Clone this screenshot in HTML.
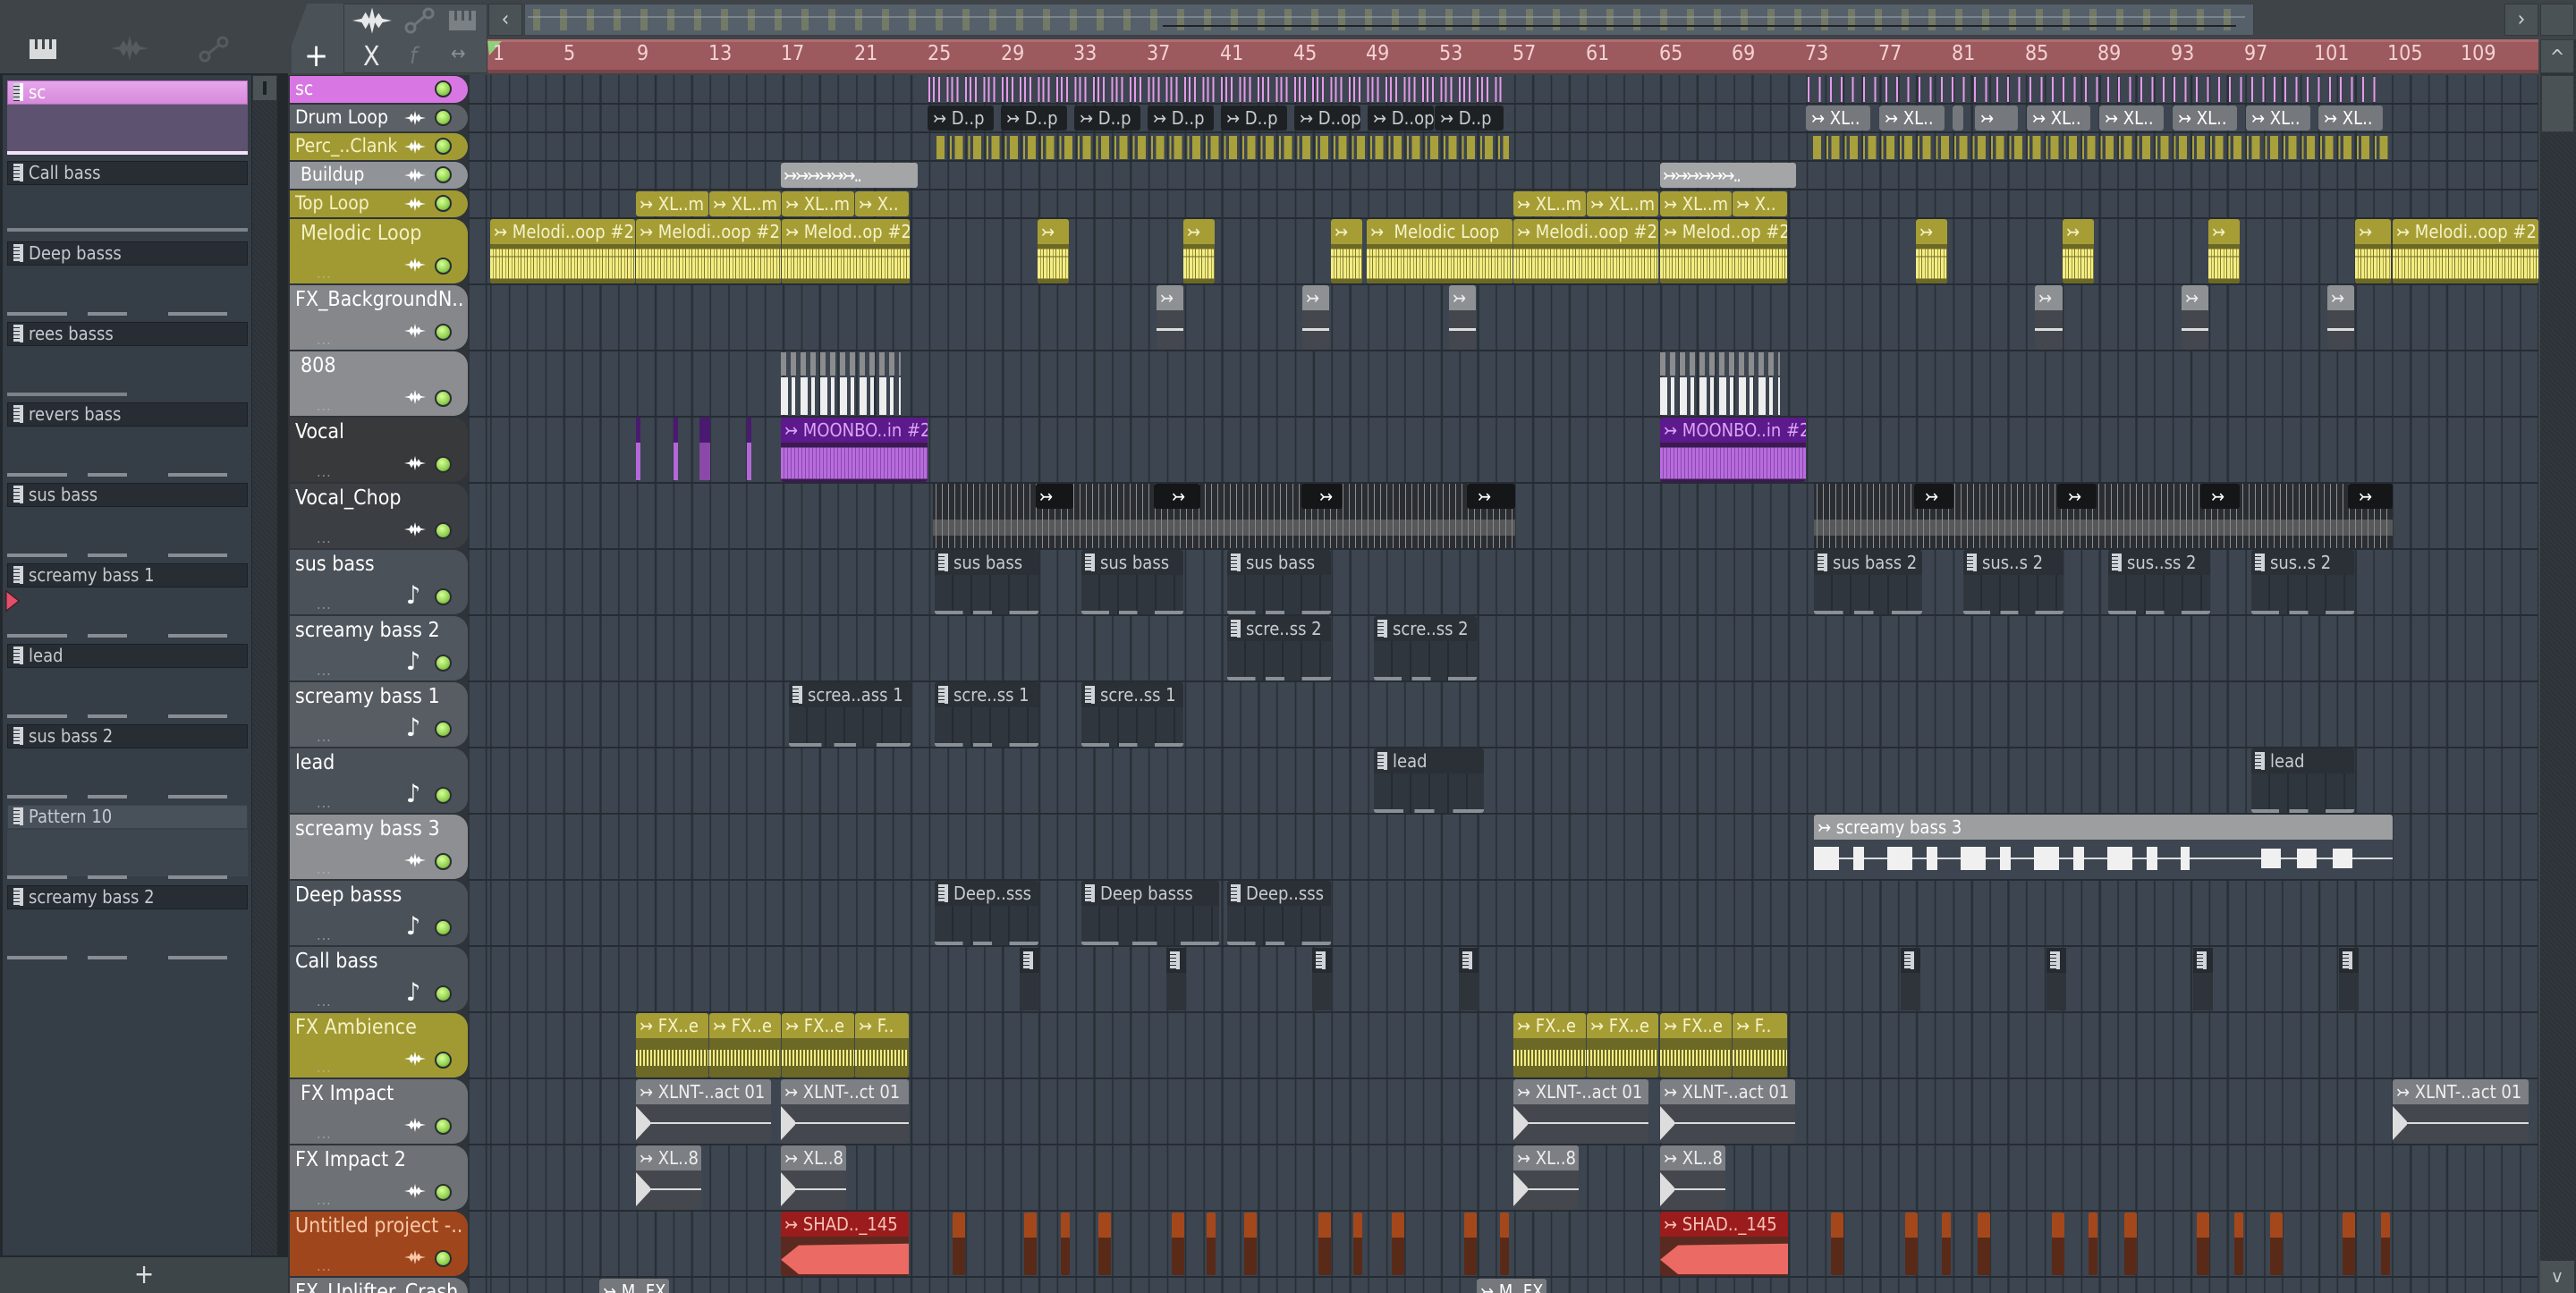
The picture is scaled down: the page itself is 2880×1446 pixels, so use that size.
<!DOCTYPE html>
<html><head><meta charset="utf-8">
<style>
*{box-sizing:border-box;margin:0;padding:0}
html,body{width:2880px;height:1446px;overflow:hidden}
body{background:#3e4448}
#root{position:relative;width:2880px;height:1446px;overflow:hidden;background:#3e4448;font-family:"DejaVu Sans","Liberation Sans",sans-serif;font-stretch:condensed}
.a{position:absolute}
.grid{position:absolute;left:523px;top:84px;width:2315px;height:1362px;background-color:#3d4550;background-image:repeating-linear-gradient(90deg,#283037 0 2px,transparent 2px 20.44px);background-position:25px 0}
.hl{position:absolute;left:523px;width:2315px;height:2px;background:#262c33}
.tr{position:absolute;left:324px;width:199px;border-radius:0 16px 16px 0;color:#fff;font-size:23px;padding:3px 0 0 6px;white-space:nowrap;overflow:hidden}
.tr.s{font-size:21px;padding-top:2px}
.led{position:absolute;left:162px;width:19px;height:19px;border-radius:50%;background:radial-gradient(circle at 40% 35%,#d8ff98,#90d050 60%,#5a8a30);border:2px solid #2a2e30}
.wv{position:absolute;left:128px;width:24px;height:22px}
.dots{position:absolute;left:30px;bottom:2px;color:#c0c0c0;font-size:16px;letter-spacing:1px;opacity:.6}
.c{position:absolute;overflow:hidden;border-radius:3px;white-space:nowrap;font-size:20px;color:#fff}
.c .h{height:28px;line-height:28px;padding-left:4px}
.c .b{position:absolute;left:0;right:0;top:28px;bottom:0}
.ol .h{background:#a69e35;color:#f6f2c8}
.ol .b{background:linear-gradient(#6c6826 0 12%,transparent 12% 30%,rgba(108,104,38,.5) 30% 34%,transparent 34% 88%,#6c6826 88%),repeating-linear-gradient(90deg,#f3ed84 0 3px,#a8a044 3px 4px,#f3ed84 4px 6px,#807a30 6px 7px)}
.gr .h{background:#7c7f83;color:#eee}
.gr .b{background:#44484e}
.pt{background:#30363d}
.pt .h{background:#2a3036;color:#c8ccd0}
.pt .b{background:repeating-linear-gradient(90deg,transparent 0 19px,#262b31 19px 21px);}
.pt .b:after{content:"";position:absolute;left:0;right:0;bottom:0;height:4px;background:linear-gradient(90deg,#8a9096 0 27%,transparent 27% 37%,#8a9096 37% 55%,transparent 55% 72%,#8a9096 72%)}
.pi{display:inline-block;width:11px;height:20px;background:#d0d4d8;vertical-align:-3px;margin-right:6px;background-image:repeating-linear-gradient(#d0d4d8 0 3px,#2a3036 3px 4px);border-right:4px solid #d0d4d8}
.pe{position:absolute;left:8px;width:269px;height:27px;background:#272d33;border:1px solid #1c2025;color:#c4cad0;font-size:20px;line-height:25px;padding-left:6px;white-space:nowrap}
.ds{position:absolute;left:8px;width:246px;height:4px;background:linear-gradient(90deg,#878d93 0 67px,transparent 67px 90px,#878d93 90px 134px,transparent 134px 180px,#878d93 180px)}
.ps{position:absolute;top:1356px;width:14px;height:70px;border-radius:2px;background:linear-gradient(#a4481c 0 28px,#5a2a18 28px)}
.mk{position:absolute;top:1060px;width:22px;height:70px;background:linear-gradient(#262b31 0 28px,#2e343a 28px)}
</style></head><body><div id="root">

<div class="a" style="left:0;top:0;width:322px;height:82px;background:#3e4448"></div>
<div class="a" style="left:33px;top:44px;width:30px;height:22px;background:#d8dadc"></div>
<div class="a" style="left:39px;top:44px;width:3px;height:11px;background:#3e4448"></div>
<div class="a" style="left:47px;top:44px;width:3px;height:11px;background:#3e4448"></div>
<div class="a" style="left:55px;top:44px;width:3px;height:11px;background:#3e4448"></div>
<svg class="a" style="left:124px;top:40px" width="42" height="28" viewBox="0 0 42 28"><path d="M0 14 L10 12 L14 5 L18 12 L21 0 L24 12 L28 6 L32 12 L42 14 L32 16 L28 22 L24 16 L21 28 L18 16 L14 23 L10 16 Z" fill="#555b60"/></svg>
<svg class="a" style="left:222px;top:40px" width="34" height="30" viewBox="0 0 34 30"><circle cx="7" cy="23" r="5" stroke="#555b60" stroke-width="3" fill="none"/><circle cx="27" cy="7" r="5" stroke="#555b60" stroke-width="3" fill="none"/><path d="M11 20 L23 10" stroke="#555b60" stroke-width="3"/></svg>

<div class="a" style="left:0;top:82px;width:322px;height:1324px;background:#23282d"></div>
<div class="a" style="left:3px;top:84px;width:278px;height:1320px;background:#353d46"></div>
<div class="a" style="left:282px;top:84px;width:28px;height:1320px;background:repeating-linear-gradient(45deg,#2c3237 0 2px,#31373d 2px 4px)"></div>
<div class="a" style="left:283px;top:85px;width:26px;height:27px;background:#4c5357"><div class="a" style="left:11px;top:6px;width:4px;height:15px;background:#1e2226"></div></div>
<div class="a" style="left:0;top:1406px;width:322px;height:40px;background:#3e4549;color:#ddd;font-size:30px;text-align:center;line-height:40px">+</div>

<div class="pe" style="top:90px;background:linear-gradient(#e6a6ec,#d68ada);color:#fff;border-color:#b06ab8"><span class="pi" style="background-color:#fff;border-right-color:#fff"></span>sc</div>
<div class="a" style="left:8px;top:117px;width:269px;height:52px;background:#5d5370"></div>
<div class="a" style="left:8px;top:169px;width:269px;height:4px;background:#f6e2f6"></div>
<div class="pe" style="top:180px"><span class="pi"></span>Call bass</div>
<div class="a" style="left:8px;top:255px;width:269px;height:4px;background:#7c8288"></div>
<div class="pe" style="top:270px"><span class="pi"></span>Deep basss</div>
<div class="ds" style="top:349px"></div>
<div class="pe" style="top:360px"><span class="pi"></span>rees basss</div>
<div class="a" style="left:8px;top:439px;width:134px;height:4px;background:#7c8288"></div>
<div class="pe" style="top:450px"><span class="pi"></span>revers bass</div>
<div class="ds" style="top:529px"></div>
<div class="pe" style="top:540px"><span class="pi"></span>sus bass</div>
<div class="ds" style="top:619px"></div>
<div class="pe" style="top:630px"><span class="pi"></span>screamy bass 1</div>
<svg class="a" style="left:6px;top:660px" width="16" height="24" viewBox="0 0 16 24"><path d="M1 1 L15 12 L1 23 Z" fill="#e0506a" stroke="#401018"/></svg>
<div class="ds" style="top:709px"></div>
<div class="pe" style="top:720px"><span class="pi"></span>lead</div>
<div class="ds" style="top:799px"></div>
<div class="pe" style="top:810px"><span class="pi"></span>sus bass 2</div>
<div class="ds" style="top:889px"></div>
<div class="pe" style="top:900px;background:#48505a;border-color:#3a4148"><span class="pi"></span>Pattern 10</div>
<div class="a" style="left:8px;top:928px;width:269px;height:52px;background:#3d454f"></div>
<div class="ds" style="top:979px"></div>
<div class="pe" style="top:990px"><span class="pi"></span>screamy bass 2</div>
<div class="ds" style="top:1069px"></div>

<div class="a" style="left:322px;top:0;width:2558px;height:84px;background:#3e4448"></div>
<div class="a" style="left:326px;top:4px;width:58px;height:78px;background:#4a5157;clip-path:polygon(30% 0,100% 0,100% 100%,0 100%,0 60%)"></div>
<div class="a" style="left:340px;top:42px;color:#fff;font-size:36px">+</div>
<div class="a" style="left:384px;top:4px;width:161px;height:78px;background:#4d5459;border:1px solid #363b40"></div>
<svg class="a" style="left:394px;top:8px" width="44" height="30" viewBox="0 0 42 28"><path d="M0 14 L10 12 L14 5 L18 12 L21 0 L24 12 L28 6 L32 12 L42 14 L32 16 L28 22 L24 16 L21 28 L18 16 L14 23 L10 16 Z" fill="#e6e8ea"/></svg>
<svg class="a" style="left:452px;top:8px" width="34" height="30" viewBox="0 0 34 30"><circle cx="7" cy="23" r="5" stroke="#70767a" stroke-width="3" fill="none"/><circle cx="27" cy="7" r="5" stroke="#70767a" stroke-width="3" fill="none"/><path d="M11 20 L23 10" stroke="#70767a" stroke-width="3"/></svg>
<div class="a" style="left:502px;top:12px;width:30px;height:22px;background:#7a8084"></div>
<div class="a" style="left:508px;top:12px;width:3px;height:11px;background:#4d5459"></div>
<div class="a" style="left:516px;top:12px;width:3px;height:11px;background:#4d5459"></div>
<div class="a" style="left:524px;top:12px;width:3px;height:11px;background:#4d5459"></div>
<div class="a" style="left:406px;top:46px;color:#e6e8ea;font-size:30px">X</div>
<div class="a" style="left:458px;top:48px;color:#70767a;font-size:26px;font-style:italic">f</div>
<div class="a" style="left:504px;top:48px;color:#8a9094;font-size:22px">↔</div>
<div class="a" style="left:546px;top:4px;width:38px;height:36px;background:#4b5256;border:1px solid #33383c;color:#d0d4d6;font-size:24px;text-align:center;line-height:32px">‹</div>
<div class="a" style="left:586px;top:4px;width:1934px;height:36px;background:#56606a;border:1px solid #3a4146"></div>
<div class="a" style="left:590px;top:10px;width:1920px;height:24px;background:repeating-linear-gradient(90deg,transparent 0 6px,rgba(200,200,90,.5) 6px 14px,transparent 14px 30px);opacity:.5"></div>
<div class="a" style="left:590px;top:18px;width:1920px;height:2px;background:#9ea6ae;opacity:.5"></div>
<div class="a" style="left:1300px;top:28px;width:1200px;height:2px;background:#222"></div>
<div class="a" style="left:2800px;top:4px;width:38px;height:36px;background:#4b5256;border:1px solid #33383c;color:#d0d4d6;font-size:24px;text-align:center;line-height:32px">›</div>
<div class="a" style="left:2840px;top:4px;width:38px;height:36px;background:#4b5256;border:1px solid #33383c"></div>

<div class="a" style="left:545px;top:44px;width:2293px;height:38px;background:linear-gradient(#b06c70 0 3px,#9c5a5e 3px 34px,#7a4448 34px)"></div>
<svg class="a" style="left:545px;top:46px" width="18" height="16"><path d="M0 0 L16 0 L2 16 Z" fill="#8ed07a"/></svg>
<div class="a" style="left:0;top:47px;font-size:23px;color:#f4d2d2;white-space:nowrap">
<span class="a" style="left:551px">1</span><span class="a" style="left:630px">5</span><span class="a" style="left:712px">9</span><span class="a" style="left:792px">13</span><span class="a" style="left:873px">17</span><span class="a" style="left:955px">21</span><span class="a" style="left:1037px">25</span><span class="a" style="left:1119px">29</span><span class="a" style="left:1200px">33</span><span class="a" style="left:1282px">37</span><span class="a" style="left:1364px">41</span><span class="a" style="left:1446px">45</span><span class="a" style="left:1527px">49</span><span class="a" style="left:1609px">53</span><span class="a" style="left:1691px">57</span><span class="a" style="left:1773px">61</span><span class="a" style="left:1855px">65</span><span class="a" style="left:1936px">69</span><span class="a" style="left:2018px">73</span><span class="a" style="left:2100px">77</span><span class="a" style="left:2182px">81</span><span class="a" style="left:2264px">85</span><span class="a" style="left:2345px">89</span><span class="a" style="left:2427px">93</span><span class="a" style="left:2509px">97</span><span class="a" style="left:2587px">101</span><span class="a" style="left:2669px">105</span><span class="a" style="left:2751px">109</span></div>

<div class="a" style="left:2840px;top:44px;width:40px;height:1402px;background:repeating-linear-gradient(45deg,#2c3237 0 2px,#31373d 2px 4px)"></div>
<div class="a" style="left:2840px;top:44px;width:38px;height:38px;background:#4b5256;border:1px solid #33383c;color:#ccc;text-align:center;font-size:22px;line-height:40px">^</div>
<div class="a" style="left:2841px;top:84px;width:37px;height:64px;background:#4b5256;border:1px solid #33383c"></div>
<div class="a" style="left:2840px;top:1410px;width:38px;height:36px;background:#4b5256;color:#ccc;text-align:center;font-size:20px;line-height:34px">v</div>

<div class="grid"></div>
<div class="a" style="left:322px;top:84px;width:203px;height:1362px;background:#2e343a"></div>
<div class="hl" style="top:115px"></div><div class="hl" style="top:147px"></div><div class="hl" style="top:179px"></div><div class="hl" style="top:211px"></div><div class="hl" style="top:243px"></div><div class="hl" style="top:317px"></div><div class="hl" style="top:391px"></div><div class="hl" style="top:465px"></div><div class="hl" style="top:539px"></div><div class="hl" style="top:613px"></div><div class="hl" style="top:687px"></div><div class="hl" style="top:761px"></div><div class="hl" style="top:835px"></div><div class="hl" style="top:909px"></div><div class="hl" style="top:983px"></div><div class="hl" style="top:1057px"></div><div class="hl" style="top:1131px"></div><div class="hl" style="top:1205px"></div><div class="hl" style="top:1279px"></div><div class="hl" style="top:1353px"></div><div class="hl" style="top:1427px"></div>

<div class="tr s" style="top:85px;height:30px;background:#d877e3">sc<div class="led" style="top:5px"></div></div>
<div class="tr s" style="top:117px;height:30px;background:#5c6167">Drum Loop<svg class="wv" style="top:4px" viewBox="0 0 42 28"><path d="M0 14 L10 12 L14 5 L18 12 L21 0 L24 12 L28 6 L32 12 L42 14 L32 16 L28 22 L24 16 L21 28 L18 16 L14 23 L10 16 Z" fill="#fff"/></svg><div class="led" style="top:5px"></div></div>
<div class="tr s" style="top:149px;height:30px;background:#a19a33;color:#f4f0c4">Perc_..Clank<svg class="wv" style="top:4px" viewBox="0 0 42 28"><path d="M0 14 L10 12 L14 5 L18 12 L21 0 L24 12 L28 6 L32 12 L42 14 L32 16 L28 22 L24 16 L21 28 L18 16 L14 23 L10 16 Z" fill="#fff"/></svg><div class="led" style="top:5px"></div></div>
<div class="tr s" style="top:181px;height:30px;background:#909397;padding-left:12px">Buildup<svg class="wv" style="top:4px" viewBox="0 0 42 28"><path d="M0 14 L10 12 L14 5 L18 12 L21 0 L24 12 L28 6 L32 12 L42 14 L32 16 L28 22 L24 16 L21 28 L18 16 L14 23 L10 16 Z" fill="#fff"/></svg><div class="led" style="top:5px"></div></div>
<div class="tr s" style="top:213px;height:30px;background:#a19a33;color:#f4f0c4">Top Loop<svg class="wv" style="top:4px" viewBox="0 0 42 28"><path d="M0 14 L10 12 L14 5 L18 12 L21 0 L24 12 L28 6 L32 12 L42 14 L32 16 L28 22 L24 16 L21 28 L18 16 L14 23 L10 16 Z" fill="#fff"/></svg><div class="led" style="top:5px"></div></div>

<div class="tr" style="top:245px;height:72px;background:#a19a33;color:#f4f0c4;padding-left:12px">Melodic Loop<svg class="wv" style="top:40px" viewBox="0 0 42 28"><path d="M0 14 L10 12 L14 5 L18 12 L21 0 L24 12 L28 6 L32 12 L42 14 L32 16 L28 22 L24 16 L21 28 L18 16 L14 23 L10 16 Z" fill="#fff"/></svg><div class="led" style="top:43px"></div><div class="dots">...</div></div>
<div class="tr" style="top:319px;height:72px;background:#85878b">FX_BackgroundN..<svg class="wv" style="top:40px" viewBox="0 0 42 28"><path d="M0 14 L10 12 L14 5 L18 12 L21 0 L24 12 L28 6 L32 12 L42 14 L32 16 L28 22 L24 16 L21 28 L18 16 L14 23 L10 16 Z" fill="#fff"/></svg><div class="led" style="top:43px"></div><div class="dots">...</div></div>
<div class="tr" style="top:393px;height:72px;background:#8b8d90;padding-left:12px">808<svg class="wv" style="top:40px" viewBox="0 0 42 28"><path d="M0 14 L10 12 L14 5 L18 12 L21 0 L24 12 L28 6 L32 12 L42 14 L32 16 L28 22 L24 16 L21 28 L18 16 L14 23 L10 16 Z" fill="#fff"/></svg><div class="led" style="top:43px"></div><div class="dots">...</div></div>
<div class="tr" style="top:467px;height:72px;background:#38393b">Vocal<svg class="wv" style="top:40px" viewBox="0 0 42 28"><path d="M0 14 L10 12 L14 5 L18 12 L21 0 L24 12 L28 6 L32 12 L42 14 L32 16 L28 22 L24 16 L21 28 L18 16 L14 23 L10 16 Z" fill="#fff"/></svg><div class="led" style="top:43px"></div><div class="dots">...</div></div>
<div class="tr" style="top:541px;height:72px;background:#3b3e43">Vocal_Chop<svg class="wv" style="top:40px" viewBox="0 0 42 28"><path d="M0 14 L10 12 L14 5 L18 12 L21 0 L24 12 L28 6 L32 12 L42 14 L32 16 L28 22 L24 16 L21 28 L18 16 L14 23 L10 16 Z" fill="#fff"/></svg><div class="led" style="top:43px"></div><div class="dots">...</div></div>
<div class="tr" style="top:615px;height:72px;background:#4b5158">sus bass<span class="a" style="left:130px;top:34px;font-size:28px">♪</span><div class="led" style="top:43px"></div><div class="dots">...</div></div>
<div class="tr" style="top:689px;height:72px;background:#51575e">screamy bass 2<span class="a" style="left:130px;top:34px;font-size:28px">♪</span><div class="led" style="top:43px"></div><div class="dots">...</div></div>
<div class="tr" style="top:763px;height:72px;background:#585d63">screamy bass 1<span class="a" style="left:130px;top:34px;font-size:28px">♪</span><div class="led" style="top:43px"></div><div class="dots">...</div></div>
<div class="tr" style="top:837px;height:72px;background:#4b5158">lead<span class="a" style="left:130px;top:34px;font-size:28px">♪</span><div class="led" style="top:43px"></div><div class="dots">...</div></div>
<div class="tr" style="top:911px;height:72px;background:#8d8f92">screamy bass 3<svg class="wv" style="top:40px" viewBox="0 0 42 28"><path d="M0 14 L10 12 L14 5 L18 12 L21 0 L24 12 L28 6 L32 12 L42 14 L32 16 L28 22 L24 16 L21 28 L18 16 L14 23 L10 16 Z" fill="#fff"/></svg><div class="led" style="top:43px"></div><div class="dots">...</div></div>
<div class="tr" style="top:985px;height:72px;background:#4b5158">Deep basss<span class="a" style="left:130px;top:34px;font-size:28px">♪</span><div class="led" style="top:43px"></div><div class="dots">...</div></div>
<div class="tr" style="top:1059px;height:72px;background:#4b5158">Call bass<span class="a" style="left:130px;top:34px;font-size:28px">♪</span><div class="led" style="top:43px"></div><div class="dots">...</div></div>
<div class="tr" style="top:1133px;height:72px;background:#a19a33;color:#f4f0c4">FX Ambience<svg class="wv" style="top:40px" viewBox="0 0 42 28"><path d="M0 14 L10 12 L14 5 L18 12 L21 0 L24 12 L28 6 L32 12 L42 14 L32 16 L28 22 L24 16 L21 28 L18 16 L14 23 L10 16 Z" fill="#fff"/></svg><div class="led" style="top:43px"></div><div class="dots">...</div></div>
<div class="tr" style="top:1207px;height:72px;background:#6e7175;padding-left:12px">FX Impact<svg class="wv" style="top:40px" viewBox="0 0 42 28"><path d="M0 14 L10 12 L14 5 L18 12 L21 0 L24 12 L28 6 L32 12 L42 14 L32 16 L28 22 L24 16 L21 28 L18 16 L14 23 L10 16 Z" fill="#fff"/></svg><div class="led" style="top:43px"></div><div class="dots">...</div></div>
<div class="tr" style="top:1281px;height:72px;background:#6e7175">FX Impact 2<svg class="wv" style="top:40px" viewBox="0 0 42 28"><path d="M0 14 L10 12 L14 5 L18 12 L21 0 L24 12 L28 6 L32 12 L42 14 L32 16 L28 22 L24 16 L21 28 L18 16 L14 23 L10 16 Z" fill="#fff"/></svg><div class="led" style="top:43px"></div><div class="dots">...</div></div>
<div class="tr" style="top:1355px;height:72px;background:#a0461d;color:#f8c8a8">Untitled project -..<svg class="wv" style="top:40px" viewBox="0 0 42 28"><path d="M0 14 L10 12 L14 5 L18 12 L21 0 L24 12 L28 6 L32 12 L42 14 L32 16 L28 22 L24 16 L21 28 L18 16 L14 23 L10 16 Z" fill="#f8c8a8"/></svg><div class="led" style="top:43px"></div><div class="dots">...</div></div>
<div class="tr" style="top:1429px;height:72px;background:#6e7175">FX_Uplifter_Crash</div>

<div class="a" style="left:1038px;top:86px;width:643px;height:28px;background:repeating-linear-gradient(90deg,#e49ae8 0 2px,transparent 2px 5px,#e49ae8 5px 7px,transparent 7px 11px,#e49ae8 11px 13px,transparent 13px 20.44px)"></div>
<div class="a" style="left:2021px;top:86px;width:645px;height:28px;background:repeating-linear-gradient(90deg,#e49ae8 0 2px,transparent 2px 12.4px)"></div>

<div class="c" style="left:1037px;top:118px;width:74px;height:28px;background:#1e2124;color:#c8ccd0;padding-left:6px;line-height:28px">↣ D..p</div>
<div class="c" style="left:1119px;top:118px;width:74px;height:28px;background:#1e2124;color:#c8ccd0;padding-left:6px;line-height:28px">↣ D..p</div>
<div class="c" style="left:1201px;top:118px;width:74px;height:28px;background:#1e2124;color:#c8ccd0;padding-left:6px;line-height:28px">↣ D..p</div>
<div class="c" style="left:1283px;top:118px;width:74px;height:28px;background:#1e2124;color:#c8ccd0;padding-left:6px;line-height:28px">↣ D..p</div>
<div class="c" style="left:1365px;top:118px;width:74px;height:28px;background:#1e2124;color:#c8ccd0;padding-left:6px;line-height:28px">↣ D..p</div>
<div class="c" style="left:1447px;top:118px;width:74px;height:28px;background:#1e2124;color:#c8ccd0;padding-left:6px;line-height:28px">↣ D..op</div>
<div class="c" style="left:1529px;top:118px;width:74px;height:28px;background:#1e2124;color:#c8ccd0;padding-left:6px;line-height:28px">↣ D..op</div>
<div class="c" style="left:1604px;top:118px;width:77px;height:28px;background:#1e2124;color:#c8ccd0;padding-left:6px;line-height:28px">↣ D..p</div>
<div class="c" style="left:2019px;top:118px;width:72px;height:28px;background:#75787c;padding-left:6px;line-height:28px">↣ XL..</div>
<div class="c" style="left:2101px;top:118px;width:73px;height:28px;background:#75787c;padding-left:6px;line-height:28px">↣ XL..</div>
<div class="c" style="left:2183px;top:118px;width:12px;height:28px;background:#75787c"></div>
<div class="c" style="left:2208px;top:118px;width:48px;height:28px;background:#75787c;padding-left:6px;line-height:28px">↣</div>
<div class="c" style="left:2266px;top:118px;width:71px;height:28px;background:#75787c;padding-left:6px;line-height:28px">↣ XL..</div>
<div class="c" style="left:2347px;top:118px;width:72px;height:28px;background:#75787c;padding-left:6px;line-height:28px">↣ XL..</div>
<div class="c" style="left:2429px;top:118px;width:72px;height:28px;background:#75787c;padding-left:6px;line-height:28px">↣ XL..</div>
<div class="c" style="left:2511px;top:118px;width:72px;height:28px;background:#75787c;padding-left:6px;line-height:28px">↣ XL..</div>
<div class="c" style="left:2592px;top:118px;width:72px;height:28px;background:#75787c;padding-left:6px;line-height:28px">↣ XL..</div>

<div class="a" style="left:1047px;top:152px;width:640px;height:26px;background:repeating-linear-gradient(90deg,#a8a03a 0 9px,transparent 9px 15px,#a8a03a 15px 17px,transparent 17px 20.44px)"></div>
<div class="a" style="left:2027px;top:152px;width:648px;height:26px;background:repeating-linear-gradient(90deg,#a8a03a 0 9px,transparent 9px 15px,#a8a03a 15px 17px,transparent 17px 20.44px)"></div>

<div class="c" style="left:873px;top:182px;width:153px;height:28px;background:#a3a5a7;line-height:28px;padding-left:3px;letter-spacing:-2px">↣↣↣↣↣↣..</div>
<div class="c" style="left:1856px;top:182px;width:152px;height:28px;background:#a3a5a7;line-height:28px;padding-left:3px;letter-spacing:-2px">↣↣↣↣↣↣..</div>

<div class="c ol" style="left:711px;top:214px;width:81px;height:28px"><div class="h">↣ XL..m</div></div>
<div class="c ol" style="left:793px;top:214px;width:80px;height:28px"><div class="h">↣ XL..m</div></div>
<div class="c ol" style="left:874px;top:214px;width:81px;height:28px"><div class="h">↣ XL..m</div></div>
<div class="c ol" style="left:956px;top:214px;width:60px;height:28px"><div class="h">↣ X..</div></div>
<div class="c ol" style="left:1692px;top:214px;width:81px;height:28px"><div class="h">↣ XL..m</div></div>
<div class="c ol" style="left:1774px;top:214px;width:80px;height:28px"><div class="h">↣ XL..m</div></div>
<div class="c ol" style="left:1856px;top:214px;width:80px;height:28px"><div class="h">↣ XL..m</div></div>
<div class="c ol" style="left:1937px;top:214px;width:61px;height:28px"><div class="h">↣ X..</div></div>

<div class="c ol" style="left:548px;top:245px;width:162px;height:72px"><div class="h">↣ Melodi..oop #2</div><div class="b"></div></div>
<div class="c ol" style="left:711px;top:245px;width:162px;height:72px"><div class="h">↣ Melodi..oop #2</div><div class="b"></div></div>
<div class="c ol" style="left:874px;top:245px;width:143px;height:72px"><div class="h">↣ Melod..op #2</div><div class="b"></div></div>
<div class="c ol" style="left:1160px;top:245px;width:35px;height:72px"><div class="h">↣</div><div class="b"></div></div>
<div class="c ol" style="left:1323px;top:245px;width:35px;height:72px"><div class="h">↣</div><div class="b"></div></div>
<div class="c ol" style="left:1488px;top:245px;width:35px;height:72px"><div class="h">↣</div><div class="b"></div></div>
<div class="c ol" style="left:1528px;top:245px;width:163px;height:72px"><div class="h">↣ &nbsp;Melodic Loop</div><div class="b"></div></div>
<div class="c ol" style="left:1692px;top:245px;width:162px;height:72px"><div class="h">↣ Melodi..oop #2</div><div class="b"></div></div>
<div class="c ol" style="left:1856px;top:245px;width:142px;height:72px"><div class="h">↣ Melod..op #2</div><div class="b"></div></div>
<div class="c ol" style="left:2142px;top:245px;width:35px;height:72px"><div class="h">↣</div><div class="b"></div></div>
<div class="c ol" style="left:2306px;top:245px;width:35px;height:72px"><div class="h">↣</div><div class="b"></div></div>
<div class="c ol" style="left:2469px;top:245px;width:35px;height:72px"><div class="h">↣</div><div class="b"></div></div>
<div class="c ol" style="left:2633px;top:245px;width:40px;height:72px"><div class="h">↣</div><div class="b"></div></div>
<div class="c ol" style="left:2675px;top:245px;width:163px;height:72px"><div class="h">↣ Melodi..oop #2</div><div class="b"></div></div>

<div class="c gr" style="left:1293px;top:319px;width:30px;height:72px"><div class="h" style="background:#8e9194">↣</div><div class="b"><div class="a" style="left:0;right:0;top:20px;height:3px;background:#ddd"></div></div></div>
<div class="c gr" style="left:1456px;top:319px;width:30px;height:72px"><div class="h" style="background:#8e9194">↣</div><div class="b"><div class="a" style="left:0;right:0;top:20px;height:3px;background:#ddd"></div></div></div>
<div class="c gr" style="left:1620px;top:319px;width:30px;height:72px"><div class="h" style="background:#8e9194">↣</div><div class="b"><div class="a" style="left:0;right:0;top:20px;height:3px;background:#ddd"></div></div></div>
<div class="c gr" style="left:2275px;top:319px;width:31px;height:72px"><div class="h" style="background:#8e9194">↣</div><div class="b"><div class="a" style="left:0;right:0;top:20px;height:3px;background:#ddd"></div></div></div>
<div class="c gr" style="left:2439px;top:319px;width:30px;height:72px"><div class="h" style="background:#8e9194">↣</div><div class="b"><div class="a" style="left:0;right:0;top:20px;height:3px;background:#ddd"></div></div></div>
<div class="c gr" style="left:2602px;top:319px;width:30px;height:72px"><div class="h" style="background:#8e9194">↣</div><div class="b"><div class="a" style="left:0;right:0;top:20px;height:3px;background:#ddd"></div></div></div>

<div class="a" style="left:873px;top:394px;width:134px;height:26px;background:repeating-linear-gradient(90deg,#8a8c8e 0 6px,transparent 6px 11px)"></div>
<div class="a" style="left:873px;top:422px;width:134px;height:42px;background:repeating-linear-gradient(90deg,#eeeeee 0 8px,transparent 8px 12px,#eeeeee 12px 16px,transparent 16px 22px)"></div>
<div class="a" style="left:1856px;top:394px;width:134px;height:26px;background:repeating-linear-gradient(90deg,#8a8c8e 0 6px,transparent 6px 11px)"></div>
<div class="a" style="left:1856px;top:422px;width:134px;height:42px;background:repeating-linear-gradient(90deg,#eeeeee 0 8px,transparent 8px 12px,#eeeeee 12px 16px,transparent 16px 22px)"></div>

<div class="a" style="left:711px;top:467px;width:5px;height:70px;background:linear-gradient(#4a1a70 0 28px,#b468d8 28px)"></div>
<div class="a" style="left:753px;top:467px;width:5px;height:70px;background:linear-gradient(#4a1a70 0 28px,#b468d8 28px)"></div>
<div class="a" style="left:782px;top:467px;width:12px;height:70px;background:linear-gradient(#4a1a70 0 28px,#8a48a8 28px)"></div>
<div class="a" style="left:835px;top:467px;width:5px;height:70px;background:linear-gradient(#4a1a70 0 28px,#b468d8 28px)"></div>
<div class="c" style="left:873px;top:467px;width:164px;height:72px"><div class="h" style="background:#5c1a8c;color:#dca4f4">↣ MOONBO..in #2</div><div class="b" style="background:linear-gradient(#3a1a50 0 12%,transparent 12% 92%,#3a1a50 92%),repeating-linear-gradient(90deg,#b86cdc 0 3px,#8a48b0 3px 4px)"></div></div>
<div class="c" style="left:1856px;top:467px;width:163px;height:72px"><div class="h" style="background:#5c1a8c;color:#dca4f4">↣ MOONBO..in #2</div><div class="b" style="background:linear-gradient(#3a1a50 0 12%,transparent 12% 92%,#3a1a50 92%),repeating-linear-gradient(90deg,#b86cdc 0 3px,#8a48b0 3px 4px)"></div></div>

<div class="a" style="left:1043px;top:541px;width:651px;height:72px;background:repeating-linear-gradient(90deg,#2a2d31 0 3px,#8c8e90 3px 4px,#2a2d31 4px 7px)"></div>
<div class="a" style="left:1043px;top:568px;width:651px;height:44px;background:linear-gradient(transparent 30%,rgba(130,130,130,.5) 30% 70%,transparent 70%)"></div>
<div class="c" style="left:1158px;top:541px;width:42px;height:28px;background:#141618;line-height:28px;padding-left:4px">↣</div>
<div class="c" style="left:1290px;top:541px;width:52px;height:28px;background:#141618;line-height:28px;padding-left:20px">↣</div>
<div class="c" style="left:1455px;top:541px;width:46px;height:28px;background:#141618;line-height:28px;padding-left:20px">↣</div>
<div class="c" style="left:1640px;top:541px;width:54px;height:28px;background:#141618;line-height:28px;padding-left:12px">↣</div>
<div class="a" style="left:2028px;top:541px;width:647px;height:72px;background:repeating-linear-gradient(90deg,#2a2d31 0 3px,#8c8e90 3px 4px,#2a2d31 4px 7px)"></div>
<div class="a" style="left:2028px;top:568px;width:647px;height:44px;background:linear-gradient(transparent 30%,rgba(130,130,130,.5) 30% 70%,transparent 70%)"></div>
<div class="c" style="left:2140px;top:541px;width:44px;height:28px;background:#141618;line-height:28px;padding-left:12px">↣</div>
<div class="c" style="left:2300px;top:541px;width:44px;height:28px;background:#141618;line-height:28px;padding-left:12px">↣</div>
<div class="c" style="left:2460px;top:541px;width:44px;height:28px;background:#141618;line-height:28px;padding-left:12px">↣</div>
<div class="c" style="left:2625px;top:541px;width:50px;height:28px;background:#141618;line-height:28px;padding-left:12px">↣</div>

<div class="c pt" style="left:1045px;top:615px;width:116px;height:72px"><div class="h"><span class="pi"></span>sus bass</div><div class="b"></div></div>
<div class="c pt" style="left:1209px;top:615px;width:114px;height:72px"><div class="h"><span class="pi"></span>sus bass</div><div class="b"></div></div>
<div class="c pt" style="left:1372px;top:615px;width:116px;height:72px"><div class="h"><span class="pi"></span>sus bass</div><div class="b"></div></div>
<div class="c pt" style="left:2028px;top:615px;width:121px;height:72px"><div class="h"><span class="pi"></span>sus bass 2</div><div class="b"></div></div>
<div class="c pt" style="left:2195px;top:615px;width:112px;height:72px"><div class="h"><span class="pi"></span>sus..s 2</div><div class="b"></div></div>
<div class="c pt" style="left:2357px;top:615px;width:114px;height:72px"><div class="h"><span class="pi"></span>sus..ss 2</div><div class="b"></div></div>
<div class="c pt" style="left:2517px;top:615px;width:115px;height:72px"><div class="h"><span class="pi"></span>sus..s 2</div><div class="b"></div></div>

<div class="c pt" style="left:1372px;top:689px;width:116px;height:72px"><div class="h"><span class="pi"></span>scre..ss 2</div><div class="b"></div></div>
<div class="c pt" style="left:1536px;top:689px;width:115px;height:72px"><div class="h"><span class="pi"></span>scre..ss 2</div><div class="b"></div></div>

<div class="c pt" style="left:882px;top:763px;width:136px;height:72px"><div class="h"><span class="pi"></span>screa..ass 1</div><div class="b"></div></div>
<div class="c pt" style="left:1045px;top:763px;width:116px;height:72px"><div class="h"><span class="pi"></span>scre..ss 1</div><div class="b"></div></div>
<div class="c pt" style="left:1209px;top:763px;width:114px;height:72px"><div class="h"><span class="pi"></span>scre..ss 1</div><div class="b"></div></div>

<div class="c pt" style="left:1536px;top:837px;width:123px;height:72px"><div class="h"><span class="pi"></span>lead</div><div class="b"></div></div>
<div class="c pt" style="left:2517px;top:837px;width:115px;height:72px"><div class="h"><span class="pi"></span>lead</div><div class="b"></div></div>

<div class="c" style="left:2028px;top:911px;width:647px;height:72px"><div class="h" style="background:#9c9ea0">↣ screamy bass 3</div><div class="b" style="background:#3d4550"><div class="a" style="left:0;right:0;top:20px;height:2px;background:#ddd"></div><div class="a" style="left:0;width:420px;top:8px;height:26px;background:repeating-linear-gradient(90deg,#f0f0f0 0 28px,transparent 28px 44px,#f0f0f0 44px 56px,transparent 56px 82px)"></div><div class="a" style="left:500px;width:120px;top:10px;height:22px;background:repeating-linear-gradient(90deg,#f0f0f0 0 22px,transparent 22px 40px)"></div></div></div>

<div class="c pt" style="left:1045px;top:985px;width:116px;height:72px"><div class="h"><span class="pi"></span>Deep..sss</div><div class="b"></div></div>
<div class="c pt" style="left:1209px;top:985px;width:154px;height:72px"><div class="h"><span class="pi"></span>Deep basss</div><div class="b"></div></div>
<div class="c pt" style="left:1372px;top:985px;width:116px;height:72px"><div class="h"><span class="pi"></span>Deep..sss</div><div class="b"></div></div>

<div class="mk" style="left:1140px"><span class="pi" style="margin:4px 0 0 4px"></span></div>
<div class="mk" style="left:1304px"><span class="pi" style="margin:4px 0 0 4px"></span></div>
<div class="mk" style="left:1467px"><span class="pi" style="margin:4px 0 0 4px"></span></div>
<div class="mk" style="left:1631px"><span class="pi" style="margin:4px 0 0 4px"></span></div>
<div class="mk" style="left:2125px"><span class="pi" style="margin:4px 0 0 4px"></span></div>
<div class="mk" style="left:2288px"><span class="pi" style="margin:4px 0 0 4px"></span></div>
<div class="mk" style="left:2452px"><span class="pi" style="margin:4px 0 0 4px"></span></div>
<div class="mk" style="left:2615px"><span class="pi" style="margin:4px 0 0 4px"></span></div>

<div class="c ol" style="left:711px;top:1133px;width:81px;height:72px"><div class="h">↣ FX..e</div><div class="b" style="background:linear-gradient(#6c6826 0 30%,transparent 30% 70%,#6c6826 70%),repeating-linear-gradient(90deg,#f3ed84 0 2px,#6c6826 2px 4px)"></div></div>
<div class="c ol" style="left:793px;top:1133px;width:80px;height:72px"><div class="h">↣ FX..e</div><div class="b" style="background:linear-gradient(#6c6826 0 30%,transparent 30% 70%,#6c6826 70%),repeating-linear-gradient(90deg,#f3ed84 0 2px,#6c6826 2px 4px)"></div></div>
<div class="c ol" style="left:874px;top:1133px;width:81px;height:72px"><div class="h">↣ FX..e</div><div class="b" style="background:linear-gradient(#6c6826 0 30%,transparent 30% 70%,#6c6826 70%),repeating-linear-gradient(90deg,#f3ed84 0 2px,#6c6826 2px 4px)"></div></div>
<div class="c ol" style="left:956px;top:1133px;width:60px;height:72px"><div class="h">↣ F..</div><div class="b" style="background:linear-gradient(#6c6826 0 30%,transparent 30% 70%,#6c6826 70%),repeating-linear-gradient(90deg,#f3ed84 0 2px,#6c6826 2px 4px)"></div></div>
<div class="c ol" style="left:1692px;top:1133px;width:81px;height:72px"><div class="h">↣ FX..e</div><div class="b" style="background:linear-gradient(#6c6826 0 30%,transparent 30% 70%,#6c6826 70%),repeating-linear-gradient(90deg,#f3ed84 0 2px,#6c6826 2px 4px)"></div></div>
<div class="c ol" style="left:1774px;top:1133px;width:80px;height:72px"><div class="h">↣ FX..e</div><div class="b" style="background:linear-gradient(#6c6826 0 30%,transparent 30% 70%,#6c6826 70%),repeating-linear-gradient(90deg,#f3ed84 0 2px,#6c6826 2px 4px)"></div></div>
<div class="c ol" style="left:1856px;top:1133px;width:80px;height:72px"><div class="h">↣ FX..e</div><div class="b" style="background:linear-gradient(#6c6826 0 30%,transparent 30% 70%,#6c6826 70%),repeating-linear-gradient(90deg,#f3ed84 0 2px,#6c6826 2px 4px)"></div></div>
<div class="c ol" style="left:1937px;top:1133px;width:61px;height:72px"><div class="h">↣ F..</div><div class="b" style="background:linear-gradient(#6c6826 0 30%,transparent 30% 70%,#6c6826 70%),repeating-linear-gradient(90deg,#f3ed84 0 2px,#6c6826 2px 4px)"></div></div>

<div class="c gr" style="left:711px;top:1207px;width:151px;height:72px"><div class="h">↣ XLNT-..act 01</div><div class="b"><div class="a" style="left:0;right:0;top:20px;height:2px;background:#ddd"></div><div class="a" style="left:0;top:2px;width:16px;height:38px;background:#ddd;clip-path:polygon(0 0,100% 45%,100% 55%,0 100%)"></div></div></div>
<div class="c gr" style="left:873px;top:1207px;width:143px;height:72px"><div class="h">↣ XLNT-..ct 01</div><div class="b"><div class="a" style="left:0;right:0;top:20px;height:2px;background:#ddd"></div><div class="a" style="left:0;top:2px;width:16px;height:38px;background:#ddd;clip-path:polygon(0 0,100% 45%,100% 55%,0 100%)"></div></div></div>
<div class="c gr" style="left:1692px;top:1207px;width:151px;height:72px"><div class="h">↣ XLNT-..act 01</div><div class="b"><div class="a" style="left:0;right:0;top:20px;height:2px;background:#ddd"></div><div class="a" style="left:0;top:2px;width:16px;height:38px;background:#ddd;clip-path:polygon(0 0,100% 45%,100% 55%,0 100%)"></div></div></div>
<div class="c gr" style="left:1856px;top:1207px;width:151px;height:72px"><div class="h">↣ XLNT-..act 01</div><div class="b"><div class="a" style="left:0;right:0;top:20px;height:2px;background:#ddd"></div><div class="a" style="left:0;top:2px;width:16px;height:38px;background:#ddd;clip-path:polygon(0 0,100% 45%,100% 55%,0 100%)"></div></div></div>
<div class="c gr" style="left:2675px;top:1207px;width:152px;height:72px"><div class="h">↣ XLNT-..act 01</div><div class="b"><div class="a" style="left:0;right:0;top:20px;height:2px;background:#ddd"></div><div class="a" style="left:0;top:2px;width:16px;height:38px;background:#ddd;clip-path:polygon(0 0,100% 45%,100% 55%,0 100%)"></div></div></div>

<div class="c gr" style="left:711px;top:1281px;width:73px;height:72px"><div class="h">↣ XL..8</div><div class="b"><div class="a" style="left:0;right:0;top:20px;height:2px;background:#ddd"></div><div class="a" style="left:0;top:2px;width:16px;height:38px;background:#ddd;clip-path:polygon(0 0,100% 45%,100% 55%,0 100%)"></div></div></div>
<div class="c gr" style="left:873px;top:1281px;width:73px;height:72px"><div class="h">↣ XL..8</div><div class="b"><div class="a" style="left:0;right:0;top:20px;height:2px;background:#ddd"></div><div class="a" style="left:0;top:2px;width:16px;height:38px;background:#ddd;clip-path:polygon(0 0,100% 45%,100% 55%,0 100%)"></div></div></div>
<div class="c gr" style="left:1692px;top:1281px;width:73px;height:72px"><div class="h">↣ XL..8</div><div class="b"><div class="a" style="left:0;right:0;top:20px;height:2px;background:#ddd"></div><div class="a" style="left:0;top:2px;width:16px;height:38px;background:#ddd;clip-path:polygon(0 0,100% 45%,100% 55%,0 100%)"></div></div></div>
<div class="c gr" style="left:1856px;top:1281px;width:73px;height:72px"><div class="h">↣ XL..8</div><div class="b"><div class="a" style="left:0;right:0;top:20px;height:2px;background:#ddd"></div><div class="a" style="left:0;top:2px;width:16px;height:38px;background:#ddd;clip-path:polygon(0 0,100% 45%,100% 55%,0 100%)"></div></div></div>

<div class="c" style="left:873px;top:1355px;width:143px;height:72px"><div class="h" style="background:#9a1c1c;color:#f8c0b8">↣ SHAD.._145</div><div class="b" style="background:#5a2a20"><div class="a" style="left:0;right:0;top:6px;bottom:2px;background:#ec6a64;clip-path:polygon(0 55%,14% 10%,100% 5%,100% 100%,14% 100%)"></div></div></div>
<div class="c" style="left:1856px;top:1355px;width:143px;height:72px"><div class="h" style="background:#9a1c1c;color:#f8c0b8">↣ SHAD.._145</div><div class="b" style="background:#5a2a20"><div class="a" style="left:0;right:0;top:6px;bottom:2px;background:#ec6a64;clip-path:polygon(0 55%,14% 10%,100% 5%,100% 100%,14% 100%)"></div></div></div>
<div class="ps" style="left:1065px"></div><div class="ps" style="left:1145px"></div><div class="ps" style="left:1186px;width:10px"></div><div class="ps" style="left:1228px"></div><div class="ps" style="left:1310px"></div><div class="ps" style="left:1349px;width:10px"></div><div class="ps" style="left:1391px"></div><div class="ps" style="left:1474px"></div><div class="ps" style="left:1513px;width:10px"></div><div class="ps" style="left:1556px"></div><div class="ps" style="left:1637px"></div><div class="ps" style="left:1677px;width:10px"></div>
<div class="ps" style="left:2047px"></div><div class="ps" style="left:2130px"></div><div class="ps" style="left:2171px;width:10px"></div><div class="ps" style="left:2211px"></div><div class="ps" style="left:2294px"></div><div class="ps" style="left:2335px;width:10px"></div><div class="ps" style="left:2375px"></div><div class="ps" style="left:2456px"></div><div class="ps" style="left:2498px;width:10px"></div><div class="ps" style="left:2538px"></div><div class="ps" style="left:2619px"></div><div class="ps" style="left:2662px;width:10px"></div>

<div class="c" style="left:670px;top:1430px;width:78px;height:28px;background:#75787c;line-height:28px;padding-left:4px">↣ M..FX</div>
<div class="c" style="left:1651px;top:1430px;width:78px;height:28px;background:#75787c;line-height:28px;padding-left:4px">↣ M..FX</div>

</div></body></html>
